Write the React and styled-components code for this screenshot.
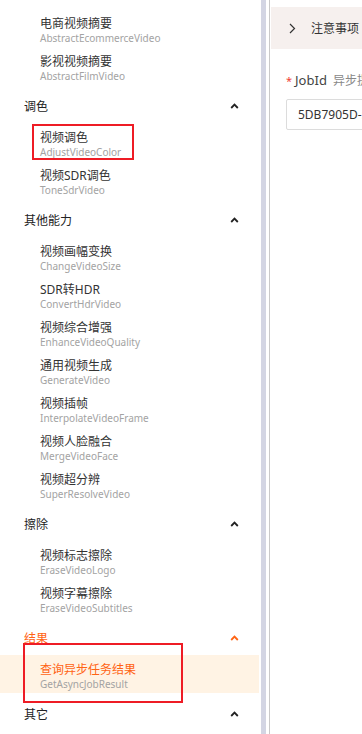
import React from 'react';
import styled, { createGlobalStyle } from 'styled-components';

const GlobalStyle = createGlobalStyle`
  html, body {
    margin: 0;
    padding: 0;
    background: #fff;
  }
  body {
    font-family: "Noto Sans", "Noto Sans CJK SC", sans-serif;
  }
`;

const ORANGE = '#ff6414';

const groups = [
  {
    title: null,
    items: [
      ['电商视频摘要', 'AbstractEcommerceVideo'],
      ['影视视频摘要', 'AbstractFilmVideo'],
    ],
  },
  {
    title: '调色',
    items: [
      ['视频调色', 'AdjustVideoColor', 'marked'],
      ['视频SDR调色', 'ToneSdrVideo'],
    ],
  },
  {
    title: '其他能力',
    items: [
      ['视频画幅变换', 'ChangeVideoSize'],
      ['SDR转HDR', 'ConvertHdrVideo'],
      ['视频综合增强', 'EnhanceVideoQuality'],
      ['通用视频生成', 'GenerateVideo'],
      ['视频插帧', 'InterpolateVideoFrame'],
      ['视频人脸融合', 'MergeVideoFace'],
      ['视频超分辨', 'SuperResolveVideo'],
    ],
  },
  {
    title: '擦除',
    items: [
      ['视频标志擦除', 'EraseVideoLogo'],
      ['视频字幕擦除', 'EraseVideoSubtitles'],
    ],
  },
  {
    title: '结果',
    active: true,
    items: [['查询异步任务结果', 'GetAsyncJobResult', 'active']],
  },
  { title: '其它', items: [] },
];

const Page = styled.div`
  display: flex;
  height: 734px;
  overflow: hidden;
`;

const Sidebar = styled.nav`
  width: 259px;
  flex-shrink: 0;
  padding-top: 9px;
  box-sizing: border-box;
  overflow: hidden;
`;

const GroupHeader = styled.div`
  height: 34px;
  display: flex;
  align-items: center;
  justify-content: space-between;
  padding: 0 20px 0 24px;
  font-size: 12px;
  color: ${(p) => (p.$active ? ORANGE : '#222')};
`;

const ItemList = styled.ul`
  list-style: none;
  margin: 0;
  padding: 0 0 4px;
`;

const Item = styled.li`
  position: relative;
  height: 38px;
  box-sizing: border-box;
  padding: 7px 0 0 40px;
  background: ${(p) => (p.$active ? '#fff3e4' : 'transparent')};
`;

const ItemName = styled.div`
  font-size: 12px;
  line-height: 16px;
  color: ${(p) => (p.$active ? ORANGE : '#333')};
  white-space: nowrap;
`;

const ItemCode = styled.div`
  font-size: 10px;
  line-height: 12px;
  color: #a3a3a3;
  white-space: nowrap;
`;

const Mark = styled.span`
  position: absolute;
  top: ${(p) => p.$top}px;
  left: ${(p) => p.$left}px;
  width: ${(p) => p.$width}px;
  height: ${(p) => p.$height}px;
  box-sizing: border-box;
  border: 2px solid #ee1c25;
  pointer-events: none;
`;

const Gutter = styled.div`
  width: 10px;
  flex-shrink: 0;
  display: flex;
  padding-left: 2px;
  box-sizing: border-box;
`;

const Thumb = styled.div`
  width: 5px;
  background: #d3d5e3;
`;

const Main = styled.main`
  flex: 1;
  min-width: 0;
  border-left: 1px solid #c9c9c9;
  overflow: hidden;
`;

const Notice = styled.div`
  margin: 7px 0 0 1px;
  height: 42px;
  display: flex;
  align-items: center;
  gap: 15px;
  padding-left: 18px;
  background: #f6f0ee;
  font-size: 12px;
  color: #333;
  white-space: nowrap;
`;

const Form = styled.div`
  padding: 22px 0 0 16px;
`;

const Label = styled.div`
  display: flex;
  align-items: center;
  height: 18px;
  white-space: nowrap;
`;

const Required = styled.span`
  color: #f04134;
  font-size: 11px;
  margin-right: 3px;
`;

const FieldName = styled.span`
  font-size: 13px;
  color: #444;
`;

const Hint = styled.span`
  font-size: 12px;
  color: #888;
  margin-left: 6px;
`;

const Input = styled.div`
  margin-top: 10px;
  width: 320px;
  height: 31px;
  box-sizing: border-box;
  border: 1px solid #dcdcdc;
  border-radius: 2px;
  padding-left: 11px;
  display: flex;
  align-items: center;
  font-size: 12px;
  color: #333;
  white-space: nowrap;
`;

const ChevronUp = () => (
  <svg width="9" height="6" viewBox="0 0 9 6">
    <path d="M1.2 5 L4.5 1.6 L7.8 5" fill="none" stroke="currentColor" strokeWidth="1.8" />
  </svg>
);

const ChevronRight = () => (
  <svg width="7" height="11" viewBox="0 0 7 11">
    <path d="M1 1 L5.5 5.5 L1 10" fill="none" stroke="#333" strokeWidth="1.2" />
  </svg>
);

export default function App() {
  return (
    <>
      <GlobalStyle />
      <Page>
        <Sidebar>
          {groups.map((g, gi) => (
            <div key={gi}>
              {g.title && (
                <GroupHeader $active={g.active}>
                  <span>{g.title}</span>
                  <ChevronUp />
                </GroupHeader>
              )}
              {g.items.length > 0 && (
                <ItemList>
                  {g.items.map(([name, code, flag]) => (
                    <Item key={code} $active={flag === 'active'}>
                      <ItemName $active={flag === 'active'}>{name}</ItemName>
                      <ItemCode>{code}</ItemCode>
                      {flag === 'marked' && <Mark $top={1} $left={32} $width={102} $height={36} />}
                      {flag === 'active' && <Mark $top={-12} $left={23} $width={160} $height={60} />}
                    </Item>
                  ))}
                </ItemList>
              )}
            </div>
          ))}
        </Sidebar>
        <Gutter>
          <Thumb />
        </Gutter>
        <Main>
          <Notice>
            <ChevronRight />
            <span>注意事项</span>
          </Notice>
          <Form>
            <Label>
              <Required>*</Required>
              <FieldName>JobId</FieldName>
              <Hint>异步提交任务时返回的 JobId</Hint>
            </Label>
            <Input>5DB7905D-5A41-4F4C-B3E8-3E1C2C0D9E1F</Input>
          </Form>
        </Main>
      </Page>
    </>
  );
}
